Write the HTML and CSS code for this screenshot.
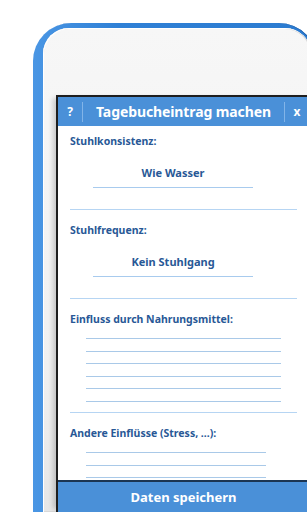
FILE: index.html
```html
<!DOCTYPE html>
<html lang="de">
<head>
    <meta charset="UTF-8">
    <meta name="viewport" content="width=device-width, initial-scale=1.0">
    <title>Tagebucheintrag machen</title>
    <link rel="stylesheet" href="styles.css">
</head>
<body>
    <div class="phone">
        <div class="bezel">
            <div class="screen">
                <div class="topbar">
                    <div class="topbar-btn">?</div>
                    <div class="sep"></div>
                    <div class="topbar-title">Tagebucheintrag machen</div>
                    <div class="sep"></div>
                    <div class="topbar-btn">x</div>
                </div>

                <div class="form">
                    <div class="field">
                        <div class="label">Stuhlkonsistenz:</div>
                        <div class="select">Wie Wasser</div>
                    </div>
                    <div class="field">
                        <div class="label">Stuhlfrequenz:</div>
                        <div class="select">Kein Stuhlgang</div>
                    </div>
                    <div class="field">
                        <div class="label">Einfluss durch Nahrungsmittel:</div>
                        <div class="lines">
                            <div class="line"></div>
                            <div class="line"></div>
                            <div class="line"></div>
                            <div class="line"></div>
                            <div class="line"></div>
                            <div class="line"></div>
                        </div>
                    </div>
                    <div class="field">
                        <div class="label">Andere Einflüsse (Stress, ...):</div>
                        <div class="lines short">
                            <div class="line"></div>
                            <div class="line"></div>
                            <div class="line"></div>
                        </div>
                    </div>
                </div>

                <div class="save">Daten speichern</div>
            </div>
        </div>
    </div>
</body>
</html>
```

FILE: styles.css
```css
body {
    margin: 0;
    width: 307px;
    height: 512px;
    overflow: hidden;
    background: #ffffff;
    font-family: "Noto Sans", "Open Sans", sans-serif;
}
.phone {
    margin: 23px 0 0 33px;
    width: 284px;
    height: 489px;
    box-sizing: border-box;
    padding: 5px 6px 0 10px;
    border-radius: 38px 38px 0 0;
    background: linear-gradient(to right, #4a96e4, #2f80d6 30%, #2b7bd0);
    box-shadow: inset -1px 0 0 #1d5ea8;
}
.bezel {
    height: 100%;
    box-sizing: border-box;
    padding: 67px 0 0 13px;
    border-radius: 26px 26px 0 0;
    background: linear-gradient(to bottom, #f7f7f7, #f0f0f0 70%, #e6e6e6);
    box-shadow: inset 1px 1px 0 #ffffff, inset 0 0 0 1px #d8d8d8;
}
.screen {
    width: 251px;
    height: 415px;
    display: flex;
    flex-direction: column;
    border-top: 2px solid #1e1e1e;
    border-left: 2px solid #1e1e1e;
    background: #ffffff;
    box-shadow: -6px 0 5px -3px rgba(0, 0, 0, 0.18);
}
.topbar {
    height: 29px;
    flex-shrink: 0;
    display: flex;
    background: #4a90d8;
    color: #ffffff;
    font-weight: bold;
}
.topbar-btn {
    width: 24px;
    display: flex;
    align-items: center;
    justify-content: center;
    font-size: 12px;
}
.sep {
    width: 1px;
    margin: 5px 0 4px;
    background: #82b4e8;
}
.topbar-title {
    flex: 1;
    display: flex;
    align-items: center;
    justify-content: center;
    font-size: 14px;
    letter-spacing: -0.1px;
}
.form {
    flex: 1;
    min-height: 0;
    overflow: hidden;
    padding: 0 12px;
    color: #285896;
    font-weight: bold;
}
.field {
    border-bottom: 1px solid #b6d5f3;
    padding-top: 13px;
}
.field:first-child {
    padding-top: 8px;
}
.label {
    font-size: 10.5px;
    line-height: 14px;
}
.select {
    width: 160px;
    margin: 18px 0 21px 23px;
    padding-bottom: 7px;
    border-bottom: 1px solid #a8cbee;
    text-align: center;
    font-size: 11px;
    line-height: 14px;
}
.lines {
    display: flex;
    flex-direction: column;
    gap: 11.6px;
    margin: 12px 16px 10px 16px;
}
.lines.short {
    margin-right: 31px;
}
.line {
    height: 1px;
    flex-shrink: 0;
    background: #a9c9e8;
}
.save {
    height: 30px;
    flex-shrink: 0;
    border-top: 2px solid #1b3553;
    background: #4a90d8;
    color: #ffffff;
    font-weight: bold;
    font-size: 13px;
    line-height: 30px;
    text-align: center;
}
```
